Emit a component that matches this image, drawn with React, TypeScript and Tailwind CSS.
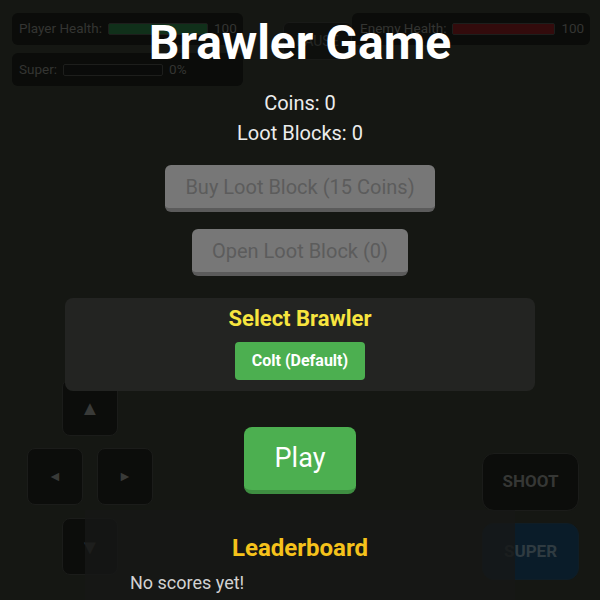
// HUD stat row: label, bar, value
function StatBar({
  label,
  value,
  barWidth,
  fill,
  fillClass,
}: {
  label: string
  value: string
  barWidth: string
  fill: number
  fillClass: string
}) {
  return (
    <div className="flex items-center gap-[6px] whitespace-nowrap text-[13.5px] leading-none text-[#343532]">
      <span>{label}</span>
      <div className={`${barWidth} h-[12px] shrink-0 rounded-[2px] border border-[#1d1e1c] bg-[#0a0b0a]`}>
        <div className={`h-full ${fillClass}`} style={{ width: `${fill}%` }} />
      </div>
      <span>{value}</span>
    </div>
  )
}

function PadButton({ className, children }: { className: string; children: React.ReactNode }) {
  return (
    <div
      className={`absolute flex h-[57px] w-[56px] items-center justify-center rounded-lg border border-[#1b1c1a] bg-[#0c0d0b] text-[#393a38] ${className}`}
    >
      {children}
    </div>
  )
}

// Dimmed game layer under the menu
function GameLayer() {
  return (
    <div className="absolute inset-0">
      {/* Top left HUD */}
      <div className="absolute left-[12px] top-[13px] flex w-[231px] flex-col gap-[8px]">
        <div className="flex h-[32px] items-center rounded-md bg-[#0b0c0a] px-[7px]">
          <StatBar label="Player Health:" value="100" barWidth="w-[100px]" fill={100} fillClass="bg-[#10301a]" />
        </div>
        <div className="flex h-[33px] items-center rounded-md bg-[#0b0c0a] px-[7px]">
          <StatBar label="Super:" value="0%" barWidth="w-[100px]" fill={0} fillClass="bg-[#0c2233]" />
        </div>
      </div>

      {/* Pause */}
      <div className="absolute left-[283px] top-[22px] flex h-[38px] w-[69px] items-center justify-center rounded-md border border-[#191a18] bg-[#0e0f0d] text-[14px] text-[#262725]">
        PAUSE
      </div>

      {/* Top right HUD */}
      <div className="absolute left-[352px] top-[13px] flex h-[32px] w-[238px] items-center rounded-md bg-[#0b0c0a] px-[8px]">
        <StatBar label="Enemy Health:" value="100" barWidth="w-[103px]" fill={100} fillClass="bg-[#330b0c]" />
      </div>

      {/* D-pad */}
      <PadButton className="left-[62px] top-[379px]">
        <span className="text-[20px]">▲</span>
      </PadButton>
      <PadButton className="left-[27px] top-[448px]">
        <span className="text-[14px]">◄</span>
      </PadButton>
      <PadButton className="left-[97px] top-[448px]">
        <span className="text-[14px]">►</span>
      </PadButton>
      <PadButton className="left-[62px] top-[518px]">
        <span className="text-[20px]">▼</span>
      </PadButton>

      {/* Action buttons */}
      <div className="absolute left-[482px] top-[453px] flex h-[58px] w-[97px] items-center justify-center rounded-xl border border-[#1b1c1a] bg-[#0c0d0b] text-[17px] font-bold text-[#363735]">
        SHOOT
      </div>
      <div className="absolute left-[482px] top-[523px] flex h-[57px] w-[97px] items-center justify-center rounded-xl border border-[#0f1d26] bg-[#0a1c29] text-[17px] font-bold text-[#2f3b41]">
        SUPER
      </div>
    </div>
  )
}

export default function App() {
  return (
    <div
      className="relative h-[600px] w-[600px] overflow-hidden bg-[#151713]"
      style={{ fontFamily: "Roboto, 'Liberation Sans', sans-serif" }}
    >
      <GameLayer />

      {/* Main menu */}
      <div className="absolute inset-0 flex flex-col items-center pt-[15px] [&>*]:shrink-0">
        <h1 className="text-[48px] font-bold leading-[56px] text-white">Brawler Game</h1>

        <p className="mt-[17px] text-[20px] leading-[30px] text-[#ececec]">Coins: 0</p>
        <p className="text-[20px] leading-[30px] text-[#ececec]">Loot Blocks: 0</p>

        <button className="mt-[17px] rounded-md border-b-4 border-[#5b5b5b] bg-[#777777] px-[20px] pb-[9px] pt-[10px] text-[20px] leading-[24px] text-[#5c5c5c]">
          Buy Loot Block (15 Coins)
        </button>
        <button className="mt-[17px] rounded-md border-b-4 border-[#5b5b5b] bg-[#777777] px-[20px] pb-[9px] pt-[10px] text-[20px] leading-[24px] text-[#5c5c5c]">
          Open Loot Block (0)
        </button>

        <div className="mt-[22px] flex h-[93px] w-[470px] flex-col items-center rounded-lg bg-[#232422] pt-[7px]">
          <h2 className="text-[22px] font-bold leading-[28px] text-[#f7e53f]">Select Brawler</h2>
          <button className="mt-[9px] flex h-[38px] w-[130px] items-center justify-center rounded-[4px] bg-[#4caf50] text-[16px] font-bold text-white">
            Colt (Default)
          </button>
        </div>

        <button className="mt-[36px] h-[67px] w-[112px] rounded-lg border-b-4 border-[#3e8e41] bg-[#4caf50] pb-[2px] text-[27px] leading-[30px] text-white">
          Play
        </button>

        <div className="mt-[16px] flex h-[120px] w-[430px] flex-col bg-[#171816]/80 px-[45px] pt-[24px]">
          <h2 className="text-center text-[24px] font-bold leading-[28px] text-[#f5c21b]">Leaderboard</h2>
          <p className="mt-[9px] text-[18px] leading-[24px] text-[#d2d2d2]">No scores yet!</p>
        </div>
      </div>
    </div>
  )
}
